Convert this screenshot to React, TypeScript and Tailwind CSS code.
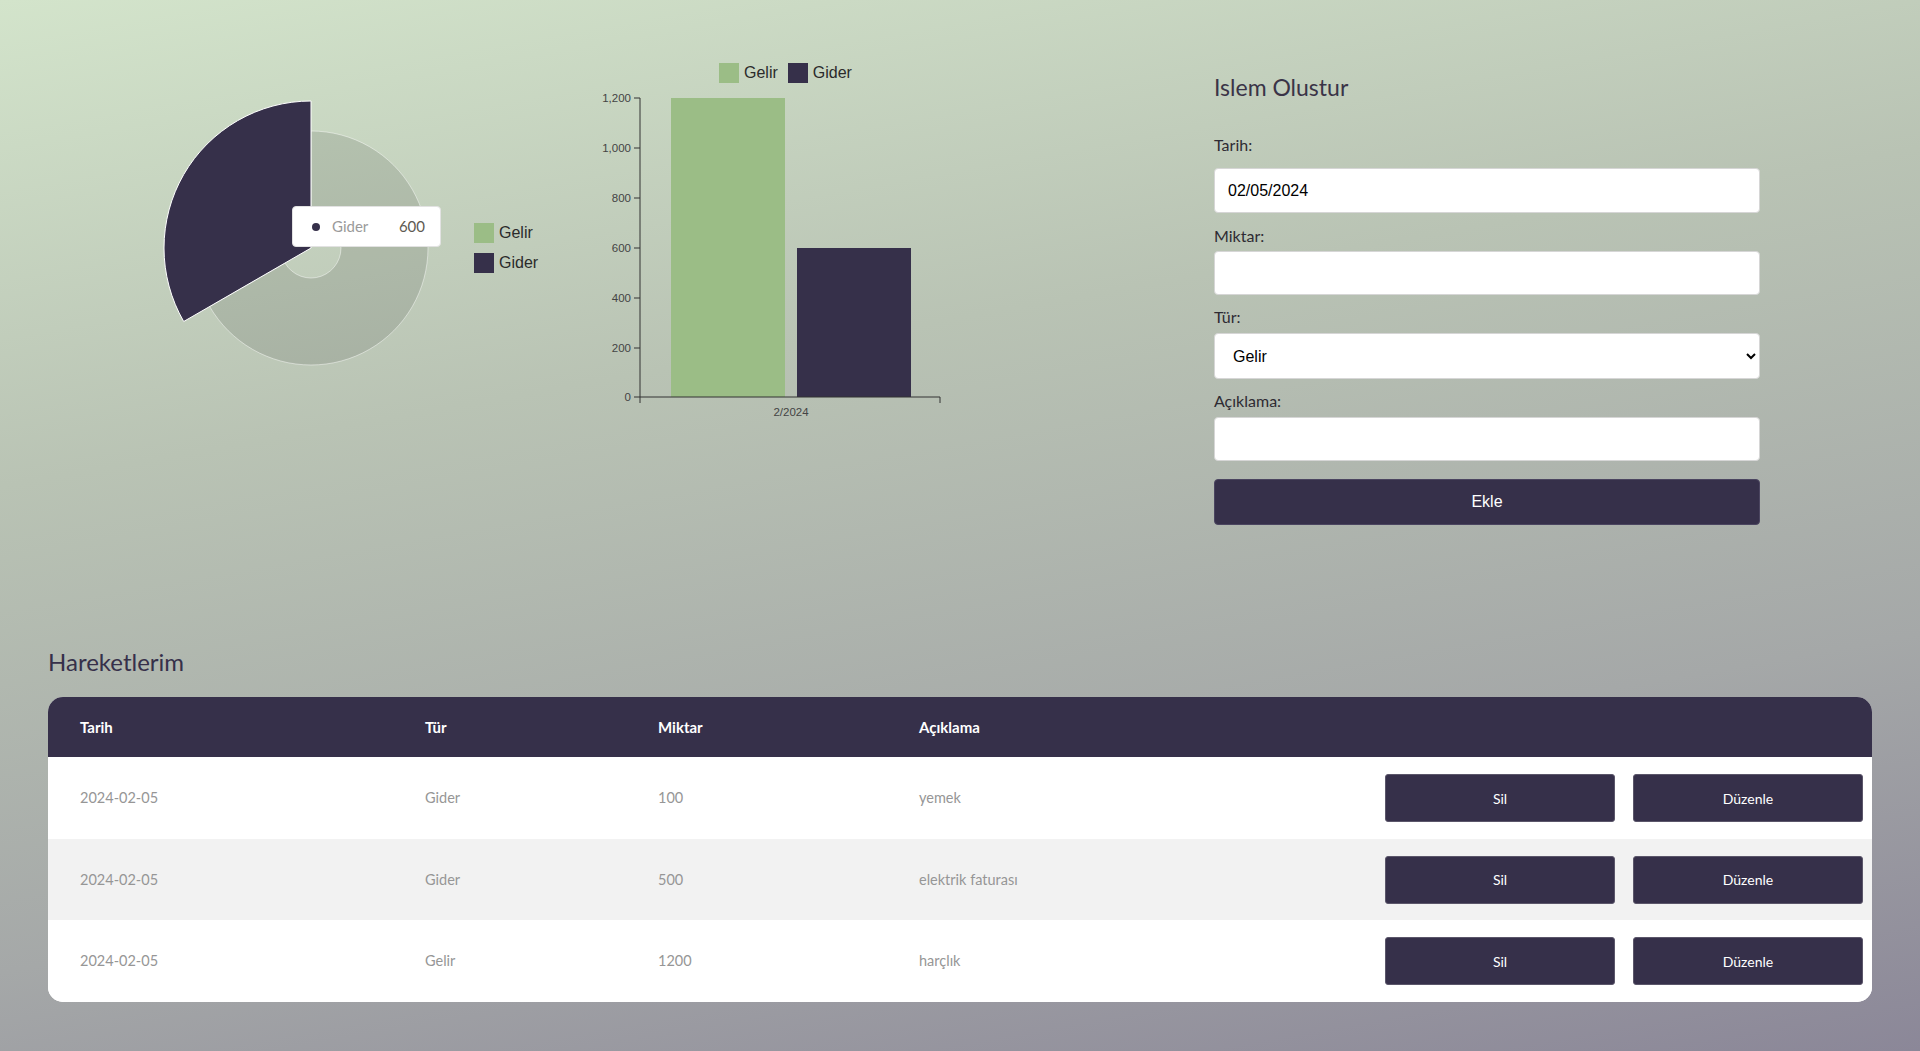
const DARK = '#36304a';
const GREEN = '#9bbd86';

const rows = [
  { date: '2024-02-05', type: 'Gider', amount: '100', desc: 'yemek', cls: 'bg-white h-[82px]' },
  { date: '2024-02-05', type: 'Gider', amount: '500', desc: 'elektrik faturası', cls: 'bg-[#f2f2f2] h-[81px]' },
  { date: '2024-02-05', type: 'Gelir', amount: '1200', desc: 'harçlık', cls: 'bg-white h-[82px]' },
];

const yTicks = [
  { label: '1,200', y: 10 },
  { label: '1,000', y: 60 },
  { label: '800', y: 110 },
  { label: '600', y: 160 },
  { label: '400', y: 210 },
  { label: '200', y: 260 },
  { label: '0', y: 309 },
];

function LegendItem({ color, label }: { color: string; label: string }) {
  return (
    <div className="flex items-center gap-[5px] h-5">
      <span className="block w-5 h-5" style={{ backgroundColor: color }} />
      <span className="text-[16px] leading-5 text-[#2b2b2b] font-['Liberation_Sans',Arial,sans-serif]">{label}</span>
    </div>
  );
}

function PieBlock() {
  return (
    <>
      <div className="relative mt-[98px] ml-[113px] w-[300px] h-[300px] shrink-0">
        <svg width="300" height="300" viewBox="0 0 300 300">
          {/* Gelir ring */}
          <path
            d="M150,33 A117,117 0 1 1 48.67,208.5 L124.02,165 A30,30 0 1 0 150,120 Z"
            fill="#000"
            fillOpacity="0.1"
            stroke="#fff"
            strokeOpacity="0.45"
          />
          {/* Gider active sector */}
          <path d="M150,150 L22.7,223.5 A147,147 0 0 1 150,3 Z" fill={DARK} stroke="#fff" strokeWidth="1" />
        </svg>
        {/* tooltip */}
        <div className="absolute left-[131px] top-[108px] w-[149px] h-[41px] bg-white rounded-[4px] border border-[#e2e2e2] flex items-center text-[15px]">
          <span className="ml-[19px] w-2 h-2 rounded-full" style={{ backgroundColor: DARK }} />
          <span className="ml-[12px] text-[#9a9a9a]">Gider</span>
          <span className="ml-auto mr-[15px] text-[#5e5a52]">600</span>
        </div>
      </div>
      <div className="mt-[223px] ml-[13px] w-[66px] shrink-0 flex flex-col gap-[10px]">
        <LegendItem color={GREEN} label="Gelir" />
        <LegendItem color={DARK} label="Gider" />
      </div>
    </>
  );
}

function BarBlock() {
  return (
    <div className="ml-[50px] w-[370px] shrink-0">
      <div className="mt-[63px] pl-[129px] flex items-center gap-[10px]">
        <LegendItem color={GREEN} label="Gelir" />
        <LegendItem color={DARK} label="Gider" />
      </div>
      <svg className="mt-[5px] block" width="370" height="340" viewBox="0 0 370 340">
        <rect x="81" y="10" width="114" height="299" fill={GREEN} />
        <rect x="207" y="160" width="114" height="149" fill={DARK} />
        <line x1="50" y1="10" x2="50" y2="309" stroke="#333" />
        <line x1="50" y1="309" x2="350" y2="309" stroke="#333" />
        <line x1="50" y1="309" x2="50" y2="315" stroke="#333" />
        <line x1="350" y1="309" x2="350" y2="315" stroke="#333" />
        {yTicks.map((t) => (
          <g key={t.label}>
            <line x1="44" y1={t.y} x2="50" y2={t.y} stroke="#333" />
            <text
              x="41"
              y={t.y + 4}
              textAnchor="end"
              fontSize="11.5"
              fill="#444"
              fontFamily="'Liberation Sans', Arial, sans-serif"
            >
              {t.label}
            </text>
          </g>
        ))}
        <text x="201" y="328" textAnchor="middle" fontSize="11.5" fill="#444" fontFamily="'Liberation Sans', Arial, sans-serif">
          2/2024
        </text>
      </svg>
    </div>
  );
}

function Form() {
  const inputCls =
    "block w-full bg-white border border-[#d6d6d6] rounded-[4px] px-[13px] text-[16px] text-black font-['Liberation_Sans',Arial,sans-serif] outline-none";
  const labelCls = 'block text-[16px] leading-6 text-[#2e2b33]';
  return (
    <div className="ml-[254px] w-[546px] shrink-0">
      <h2 className="mt-[71px] text-[23px] leading-8 text-[#3a3447]">Islem Olustur</h2>
      <label className={`${labelCls} mt-[30px]`}>Tarih:</label>
      <input className={`${inputCls} mt-[11px] h-[45px]`} type="text" defaultValue="02/05/2024" />
      <label className={`${labelCls} mt-[11px]`}>Miktar:</label>
      <input className={`${inputCls} mt-[3px] h-[44px]`} type="text" />
      <label className={`${labelCls} mt-[10px]`}>Tür:</label>
      <select className={`${inputCls} mt-[4px] h-[46px] pl-[14px] pr-[6px]`} defaultValue="Gelir">
        <option>Gelir</option>
        <option>Gider</option>
      </select>
      <label className={`${labelCls} mt-[10px]`}>Açıklama:</label>
      <input className={`${inputCls} mt-[4px] h-[44px]`} type="text" />
      <button className="mt-[18px] block w-full h-[46px] rounded-[4px] bg-[#36304a] border border-[#4b4560] text-white text-[16px] font-['Liberation_Sans',Arial,sans-serif]">
        Ekle
      </button>
    </div>
  );
}

export default function App() {
  return (
    <div className="min-h-screen bg-[linear-gradient(170deg,#d3e4cb_0%,#b9c3b4_35%,#a5a8a8_70%,#8b8798_100%)] font-['Lato',sans-serif] px-12 pb-[49px]">
      {/* charts and form */}
      <div className="flex items-start">
        <PieBlock />
        <BarBlock />
        <Form />
      </div>

      {/* transactions */}
      <h2 className="mt-[121px] text-[24px] leading-8 text-[#36304a]">Hareketlerim</h2>
      <div className="mt-[19px] rounded-[15px] overflow-hidden bg-white">
        <div className="grid grid-cols-[345px_233px_261px_1fr_248px_248px] h-[60px] items-center bg-[#36304a] text-white text-[15px] font-bold">
          <div className="pl-8">Tarih</div>
          <div className="pl-8">Tür</div>
          <div className="pl-8">Miktar</div>
          <div className="pl-8">Açıklama</div>
          <div />
          <div />
        </div>
        {rows.map((r, i) => (
          <div key={i} className={`grid grid-cols-[345px_233px_261px_1fr_248px_248px] items-center text-[14.5px] text-[#969696] ${r.cls}`}>
            <div className="pl-8">{r.date}</div>
            <div className="pl-8">{r.type}</div>
            <div className="pl-8">{r.amount}</div>
            <div className="pl-8">{r.desc}</div>
            <div className="px-[9px]">
              <button className="w-full h-[48px] rounded-[3px] bg-[#36304a] border border-[#5b566a] text-white text-[14px]">
                Sil
              </button>
            </div>
            <div className="px-[9px]">
              <button className="w-full h-[48px] rounded-[3px] bg-[#36304a] border border-[#5b566a] text-white text-[14px]">
                Düzenle
              </button>
            </div>
          </div>
        ))}
      </div>
    </div>
  );
}
